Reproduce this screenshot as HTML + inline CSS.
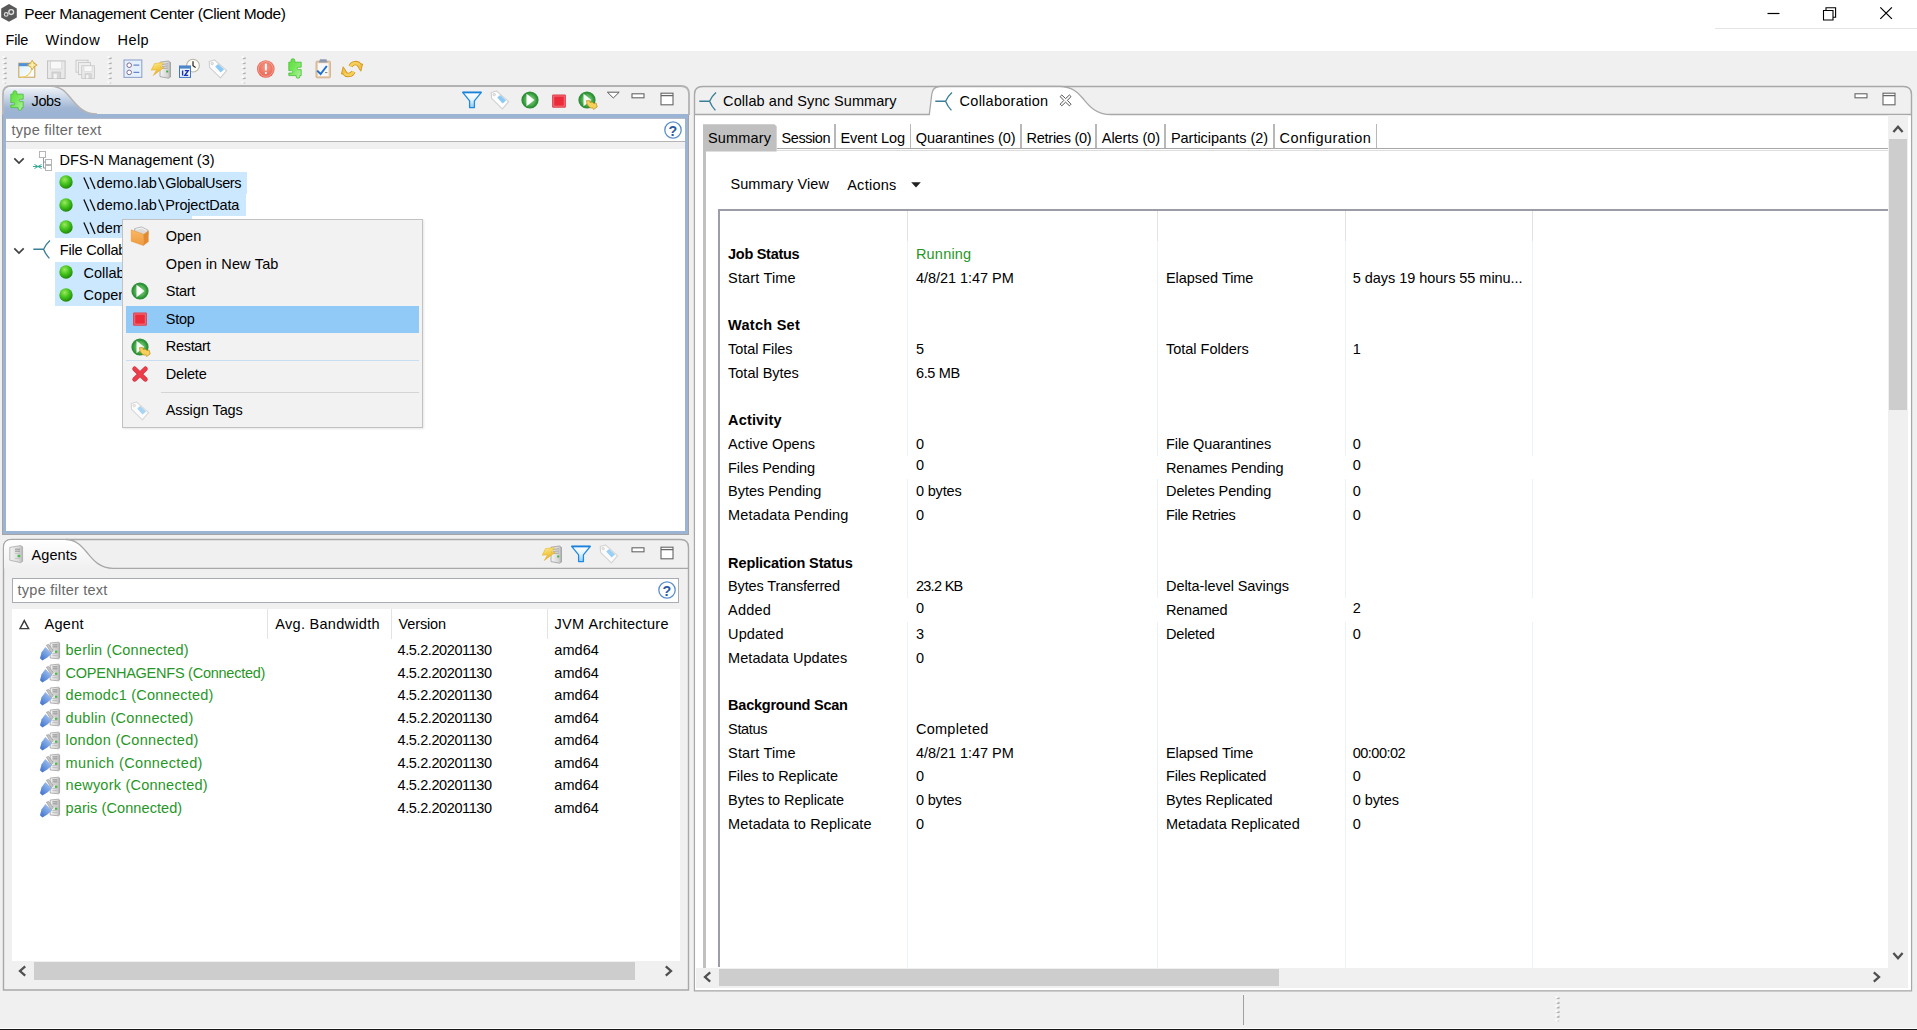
<!DOCTYPE html>
<html><head><meta charset="utf-8"><title>Peer Management Center (Client Mode)</title>
<style>
html,body{margin:0;padding:0;}
body{width:1917px;height:1030px;overflow:hidden;background:#f0f0f0;position:relative;font-family:"Liberation Sans",sans-serif;}
.t{position:absolute;white-space:nowrap;font-family:"Liberation Sans",sans-serif;}
.b{position:absolute;box-sizing:border-box;}
</style></head><body>
<div class="b" style="left:0px;top:0px;width:1917px;height:51px;background:#fff;"></div>
<div class="b" style="left:1715px;top:28px;width:202px;height:1px;background:#e5e5e5;"></div>
<svg class="b" style="left:0px;top:3px;" width="20" height="20" viewBox="0 0 20 20"><polygon points="9,1 16.8,5.4 16.8,14.4 9,18.8 1.2,14.4 1.2,5.4" fill="#595959"/><circle cx="6.2" cy="11.4" r="1.8" fill="none" stroke="#dcdcdc" stroke-width="1.2"/><circle cx="11.2" cy="9.1" r="2.4" fill="none" stroke="#e2e2e2" stroke-width="1.3"/></svg>
<div class="t" style="left:24.2px;top:6px;font-size:15.5px;line-height:15.5px;color:#000;letter-spacing:-0.397px;">Peer&nbsp;Management&nbsp;Center&nbsp;(Client&nbsp;Mode)</div>
<svg class="b" style="left:1760px;top:0px;" width="157" height="28" viewBox="0 0 157 28"><path d="M7.5 13.5h12" stroke="#000" stroke-width="1.2" fill="none"/><path d="M63.5 10.5h9.5v9.5h-9.5z M66 10.3v-2.6h9.6v9.6h-2.6" stroke="#000" stroke-width="1.1" fill="none"/><path d="M120.3 7.3l11.6 11.6M131.9 7.3l-11.6 11.6" stroke="#000" stroke-width="1.2" fill="none"/></svg>
<div class="t" style="left:5.6px;top:33px;font-size:14.5px;line-height:14.5px;color:#000;letter-spacing:-0.216px;">File</div>
<div class="t" style="left:45.6px;top:33px;font-size:14.5px;line-height:14.5px;color:#000;letter-spacing:0.488px;">Window</div>
<div class="t" style="left:117.6px;top:33px;font-size:14.5px;line-height:14.5px;color:#000;letter-spacing:0.419px;">Help</div>
<svg class="b" style="left:2.0999999999999996px;top:54.8px;" width="6" height="34.0" viewBox="0 0 6 34.0"><rect x="0.4" y="1.10" width="2" height="2" fill="#fbfbfb"/><path d="M1.6 4.10L4.4 1.90V4.10Z" fill="#ababab"/><rect x="1.8" y="3.10" width="2.6" height="1" fill="#b2b2b2"/><rect x="0.4" y="6.10" width="2" height="2" fill="#fbfbfb"/><path d="M1.6 9.10L4.4 6.90V9.10Z" fill="#ababab"/><rect x="1.8" y="8.10" width="2.6" height="1" fill="#b2b2b2"/><rect x="0.4" y="11.10" width="2" height="2" fill="#fbfbfb"/><path d="M1.6 14.10L4.4 11.90V14.10Z" fill="#ababab"/><rect x="1.8" y="13.10" width="2.6" height="1" fill="#b2b2b2"/><rect x="0.4" y="16.10" width="2" height="2" fill="#fbfbfb"/><path d="M1.6 19.10L4.4 16.90V19.10Z" fill="#ababab"/><rect x="1.8" y="18.10" width="2.6" height="1" fill="#b2b2b2"/><rect x="0.4" y="21.10" width="2" height="2" fill="#fbfbfb"/><path d="M1.6 24.10L4.4 21.90V24.10Z" fill="#ababab"/><rect x="1.8" y="23.10" width="2.6" height="1" fill="#b2b2b2"/><rect x="0.4" y="26.10" width="2" height="2" fill="#fbfbfb"/><rect x="2.6" y="27.50" width="1.6" height="1" fill="#c4c4c4"/></svg>
<svg class="b" style="left:107.2px;top:54.8px;" width="6" height="34.0" viewBox="0 0 6 34.0"><rect x="0.4" y="1.10" width="2" height="2" fill="#fbfbfb"/><path d="M1.6 4.10L4.4 1.90V4.10Z" fill="#ababab"/><rect x="1.8" y="3.10" width="2.6" height="1" fill="#b2b2b2"/><rect x="0.4" y="6.10" width="2" height="2" fill="#fbfbfb"/><path d="M1.6 9.10L4.4 6.90V9.10Z" fill="#ababab"/><rect x="1.8" y="8.10" width="2.6" height="1" fill="#b2b2b2"/><rect x="0.4" y="11.10" width="2" height="2" fill="#fbfbfb"/><path d="M1.6 14.10L4.4 11.90V14.10Z" fill="#ababab"/><rect x="1.8" y="13.10" width="2.6" height="1" fill="#b2b2b2"/><rect x="0.4" y="16.10" width="2" height="2" fill="#fbfbfb"/><path d="M1.6 19.10L4.4 16.90V19.10Z" fill="#ababab"/><rect x="1.8" y="18.10" width="2.6" height="1" fill="#b2b2b2"/><rect x="0.4" y="21.10" width="2" height="2" fill="#fbfbfb"/><path d="M1.6 24.10L4.4 21.90V24.10Z" fill="#ababab"/><rect x="1.8" y="23.10" width="2.6" height="1" fill="#b2b2b2"/><rect x="0.4" y="26.10" width="2" height="2" fill="#fbfbfb"/><rect x="2.6" y="27.50" width="1.6" height="1" fill="#c4c4c4"/></svg>
<svg class="b" style="left:241.1px;top:54.8px;" width="6" height="34.0" viewBox="0 0 6 34.0"><rect x="0.4" y="1.10" width="2" height="2" fill="#fbfbfb"/><path d="M1.6 4.10L4.4 1.90V4.10Z" fill="#ababab"/><rect x="1.8" y="3.10" width="2.6" height="1" fill="#b2b2b2"/><rect x="0.4" y="6.10" width="2" height="2" fill="#fbfbfb"/><path d="M1.6 9.10L4.4 6.90V9.10Z" fill="#ababab"/><rect x="1.8" y="8.10" width="2.6" height="1" fill="#b2b2b2"/><rect x="0.4" y="11.10" width="2" height="2" fill="#fbfbfb"/><path d="M1.6 14.10L4.4 11.90V14.10Z" fill="#ababab"/><rect x="1.8" y="13.10" width="2.6" height="1" fill="#b2b2b2"/><rect x="0.4" y="16.10" width="2" height="2" fill="#fbfbfb"/><path d="M1.6 19.10L4.4 16.90V19.10Z" fill="#ababab"/><rect x="1.8" y="18.10" width="2.6" height="1" fill="#b2b2b2"/><rect x="0.4" y="21.10" width="2" height="2" fill="#fbfbfb"/><path d="M1.6 24.10L4.4 21.90V24.10Z" fill="#ababab"/><rect x="1.8" y="23.10" width="2.6" height="1" fill="#b2b2b2"/><rect x="0.4" y="26.10" width="2" height="2" fill="#fbfbfb"/><rect x="2.6" y="27.50" width="1.6" height="1" fill="#c4c4c4"/></svg>
<div class="b" style="left:2.1px;top:114px;width:687.3px;height:421px;background:#a4a4a4;"></div>
<div class="b" style="left:3.1px;top:114px;width:685.3px;height:420.1px;background:#9cb4d3;"></div>
<div class="b" style="left:6px;top:119px;width:679.4px;height:412px;background:#fff;"></div>
<div class="b" style="left:6px;top:118.4px;width:679.4px;height:1px;background:#b4bccb;"></div>
<div class="b" style="left:6px;top:141px;width:679.4px;height:1px;background:#b4b4b4;"></div>
<div class="b" style="left:6px;top:142px;width:679.4px;height:6.5px;background:#f0f0f0;"></div>
<svg class="b" style="left:0px;top:82px;" width="700" height="36" viewBox="0 0 700 36"><defs><linearGradient id="gj" x1="0" y1="0" x2="0" y2="1"><stop offset="0" stop-color="#ffffff"/><stop offset="0.08" stop-color="#e9eef5"/><stop offset="0.45" stop-color="#c3d1e4"/><stop offset="0.78" stop-color="#9fb5d3"/><stop offset="1" stop-color="#9cb4d3"/></linearGradient></defs><path d="M3 33V12Q3 4 11 4H681Q689 4 689 12V33" fill="none" stroke="#b2b2b2" stroke-width="1.8"/><path d="M3.9 32.3V12.5Q3.9 4.9 11.5 4.9H51C61 4.9 66 11 71 17S83 32.3 97 32.3Z" fill="url(#gj)"/><path d="M51 4.2C61 4.2 66 10.5 71 16.5S83 32 97 32" fill="none" stroke="#b2b2b2" stroke-width="1.5"/></svg>
<div class="t" style="left:31.6px;top:94px;font-size:14.5px;line-height:14.5px;color:#000;letter-spacing:-0.407px;">Jobs</div>
<div class="t" style="left:11.6px;top:123px;font-size:14.5px;line-height:14.5px;color:#686868;letter-spacing:0.236px;">type&nbsp;filter&nbsp;text</div>
<div class="b" style="left:55px;top:172px;width:191.7px;height:22.19999999999999px;background:#cce8ff;"></div>
<div class="b" style="left:55px;top:194.2px;width:190.8px;height:22.100000000000023px;background:#cce8ff;"></div>
<div class="b" style="left:55px;top:216.3px;width:137.1px;height:22.099999999999994px;background:#cce8ff;"></div>
<div class="b" style="left:55px;top:261.8px;width:137.1px;height:22.19999999999999px;background:#cce8ff;"></div>
<div class="b" style="left:55px;top:284px;width:137.1px;height:22.399999999999977px;background:#cce8ff;"></div>
<svg class="b" style="left:13px;top:156.5px;" width="12" height="8" viewBox="0 0 12 8"><path d="M1.3 1.3L6 6L10.7 1.3" fill="none" stroke="#404040" stroke-width="1.7"/></svg>
<svg class="b" style="left:13px;top:246.5px;" width="12" height="8" viewBox="0 0 12 8"><path d="M1.3 1.3L6 6L10.7 1.3" fill="none" stroke="#404040" stroke-width="1.7"/></svg>
<svg class="b" style="left:56.900000000000006px;top:173.0px;" width="18" height="18" viewBox="0 0 18 18"><defs><radialGradient id="gb" cx="0.4" cy="0.32" r="0.7"><stop offset="0" stop-color="#9be860"/><stop offset="0.5" stop-color="#45c41c"/><stop offset="1" stop-color="#1d860b"/></radialGradient></defs><circle cx="9" cy="9" r="6.7" fill="url(#gb)"/></svg>
<svg class="b" style="left:56.900000000000006px;top:195.5px;" width="18" height="18" viewBox="0 0 18 18"><defs><radialGradient id="gb" cx="0.4" cy="0.32" r="0.7"><stop offset="0" stop-color="#9be860"/><stop offset="0.5" stop-color="#45c41c"/><stop offset="1" stop-color="#1d860b"/></radialGradient></defs><circle cx="9" cy="9" r="6.7" fill="url(#gb)"/></svg>
<svg class="b" style="left:56.900000000000006px;top:218.0px;" width="18" height="18" viewBox="0 0 18 18"><defs><radialGradient id="gb" cx="0.4" cy="0.32" r="0.7"><stop offset="0" stop-color="#9be860"/><stop offset="0.5" stop-color="#45c41c"/><stop offset="1" stop-color="#1d860b"/></radialGradient></defs><circle cx="9" cy="9" r="6.7" fill="url(#gb)"/></svg>
<svg class="b" style="left:56.900000000000006px;top:263.0px;" width="18" height="18" viewBox="0 0 18 18"><defs><radialGradient id="gb" cx="0.4" cy="0.32" r="0.7"><stop offset="0" stop-color="#9be860"/><stop offset="0.5" stop-color="#45c41c"/><stop offset="1" stop-color="#1d860b"/></radialGradient></defs><circle cx="9" cy="9" r="6.7" fill="url(#gb)"/></svg>
<svg class="b" style="left:56.900000000000006px;top:285.5px;" width="18" height="18" viewBox="0 0 18 18"><defs><radialGradient id="gb" cx="0.4" cy="0.32" r="0.7"><stop offset="0" stop-color="#9be860"/><stop offset="0.5" stop-color="#45c41c"/><stop offset="1" stop-color="#1d860b"/></radialGradient></defs><circle cx="9" cy="9" r="6.7" fill="url(#gb)"/></svg>
<svg class="b" style="left:32px;top:150px;" width="22" height="22" viewBox="0 0 22 22"><rect x="7.5" y="1.5" width="6" height="6" fill="#fff" stroke="#b5b5b5"/><rect x="13.5" y="9.5" width="6" height="5" fill="#fff" stroke="#b5b5b5"/><rect x="13.5" y="15.5" width="6" height="5" fill="#fff" stroke="#b5b5b5"/><path d="M11.5 8v10M11.5 12h2M11.5 18h2" stroke="#8a9ab0" fill="none"/><path d="M1 16.5h9M2.5 14.5l7 4M2.5 18.5l7-4" stroke="#3aa89a" stroke-width="1" fill="none"/></svg>
<svg class="b" style="left:33px;top:240.4px;" width="18" height="19" viewBox="0 0 18 19"><path d="M0.3 9.2H10.6M17 0.6Q12.6 4.6 10.6 9.2Q12.4 14 16.4 18.4" fill="none" stroke="#3a7f97" stroke-width="1.35"/></svg>
<div class="t" style="left:59.6px;top:153px;font-size:14.5px;line-height:14.5px;color:#000;letter-spacing:0.014px;">DFS-N&nbsp;Management&nbsp;(3)</div>
<svg class="b" style="left:83px;top:176.8px;" width="84" height="13" viewBox="0 0 84 13"><path d="M0.9 0.4L5.9 12" stroke="#111" stroke-width="1.35" fill="none"/><path d="M7.0 0.4L12.0 12" stroke="#111" stroke-width="1.35" fill="none"/><path d="M75.7 0.4L80.7 12" stroke="#111" stroke-width="1.35" fill="none"/></svg>
<div class="t" style="left:96.5px;top:176px;font-size:14.5px;line-height:14.5px;color:#000;letter-spacing:0.106px;">demo.lab</div>
<div class="t" style="left:165.2px;top:176px;font-size:14.5px;line-height:14.5px;color:#000;letter-spacing:-0.335px;">GlobalUsers</div>
<svg class="b" style="left:83px;top:198.8px;" width="84" height="13" viewBox="0 0 84 13"><path d="M0.9 0.4L5.9 12" stroke="#111" stroke-width="1.35" fill="none"/><path d="M7.0 0.4L12.0 12" stroke="#111" stroke-width="1.35" fill="none"/><path d="M75.7 0.4L80.7 12" stroke="#111" stroke-width="1.35" fill="none"/></svg>
<div class="t" style="left:96.5px;top:198px;font-size:14.5px;line-height:14.5px;color:#000;letter-spacing:0.106px;">demo.lab</div>
<div class="t" style="left:165.2px;top:198px;font-size:14.5px;line-height:14.5px;color:#000;letter-spacing:-0.151px;">ProjectData</div>
<svg class="b" style="left:83px;top:221.8px;" width="84" height="13" viewBox="0 0 84 13"><path d="M0.9 0.4L5.9 12" stroke="#111" stroke-width="1.35" fill="none"/><path d="M7.0 0.4L12.0 12" stroke="#111" stroke-width="1.35" fill="none"/><path d="M75.7 0.4L80.7 12" stroke="#111" stroke-width="1.35" fill="none"/></svg>
<div class="t" style="left:96.5px;top:221px;font-size:14.5px;line-height:14.5px;color:#000;letter-spacing:0.106px;">demo.lab</div>
<div class="t" style="left:165.2px;top:221px;font-size:14.5px;line-height:14.5px;color:#000;letter-spacing:0.151px;">Public</div>
<div class="t" style="left:59.8px;top:243px;font-size:14.5px;line-height:14.5px;color:#000;letter-spacing:-0.194px;">File&nbsp;Collaboration&nbsp;(2)</div>
<div class="t" style="left:83.6px;top:266px;font-size:14.5px;line-height:14.5px;color:#000;letter-spacing:-0.009px;">Collaboration</div>
<div class="t" style="left:83.6px;top:288px;font-size:14.5px;line-height:14.5px;color:#000;letter-spacing:0.021px;">Copenhagen</div>
<svg class="b" style="left:461.1px;top:90.2px;" width="22" height="20" viewBox="0 0 22 20"><defs><linearGradient id="gf" x1="0" y1="0" x2="0" y2="1"><stop offset="0" stop-color="#ffffff"/><stop offset="0.5" stop-color="#e4f3fd"/><stop offset="1" stop-color="#8fcbf5"/></linearGradient></defs><path d="M1.9 2.6H20.1L13.4 10.9V17.6H8.6V10.9Z" fill="url(#gf)" stroke="#1f8ae0" stroke-width="1.3" stroke-linejoin="round"/><path d="M1.4 2.3H20.6" stroke="#1b82da" stroke-width="1.7"/></svg>
<svg class="b" style="left:490.2px;top:89.8px;" width="20" height="20" viewBox="0 0 20 20"><g opacity="1.0"><path d="M1.2 2.6L6.4 0.9L18.6 11.6L12.4 18.9L1.6 8.4Z" fill="#fefefe" stroke="#cfcfcf" stroke-width="1.1" stroke-linejoin="round"/><path d="M7.2 7.6L10.2 4.9L16 10.4L12.6 13.6Z" fill="#8ccaf6"/><circle cx="4.2" cy="4.6" r="1.25" fill="#ececec" stroke="#c4c4c4" stroke-width="0.7"/></g></svg>
<svg class="b" style="left:519.5px;top:90.2px;" width="20" height="20" viewBox="0 0 20 20"><defs><radialGradient id="gp" cx="0.5" cy="0.5" r="0.5"><stop offset="0" stop-color="#8fd486"/><stop offset="0.55" stop-color="#55b257"/><stop offset="0.82" stop-color="#2f9438"/><stop offset="1" stop-color="#2b8a33"/></radialGradient><linearGradient id="gpt" x1="0" y1="0" x2="1" y2="0"><stop offset="0" stop-color="#ffffff"/><stop offset="0.55" stop-color="#ffffff"/><stop offset="1" stop-color="#d4efd0"/></linearGradient></defs><circle cx="10" cy="10" r="8.6" fill="url(#gp)"/><path d="M6.5 3.7L14.6 10L6.5 16.3Z" fill="url(#gpt)"/></svg>
<svg class="b" style="left:549.9px;top:91.9px;" width="18" height="18" viewBox="0 0 18 18"><rect x="2.1" y="2.4" width="13.8" height="13.4" rx="1.2" fill="#e23e4b"/><rect x="3.3" y="3.6" width="11.4" height="11" fill="#f07680"/><rect x="4.2" y="4.5" width="9.6" height="9.2" fill="#ec2b3a"/></svg>
<svg class="b" style="left:576.6px;top:90.2px;" width="24" height="24" viewBox="0 0 24 24"><circle cx="10" cy="10" r="8.6" fill="url(#gp)"/><path d="M6.5 3.7L14.6 10L6.5 16.3Z" fill="url(#gpt)" opacity="0.92"/><g transform="translate(1.6,1.8) scale(0.86)"><path d="M9.2 10.2L13.2 10.4L13.6 12.4C15.4 11.8 17 12.4 17.8 13.6L20.4 13.2L21.6 17.6L17.4 20.6L16.6 18.6C14.6 19.4 12.4 18.4 11.4 16.6C10.6 15.8 10 15 9.8 14.2Z" fill="#f6d05c" stroke="#bf8a16" stroke-width="0.8" stroke-linejoin="round"/></g></svg>
<svg class="b" style="left:606px;top:90px;" width="15" height="10" viewBox="0 0 15 10"><path d="M1.4 2.2H13.2L7.3 8Z" fill="#fff" stroke="#5a5a5a" stroke-width="1"/></svg>
<svg class="b" style="left:631px;top:92.7px;" width="14" height="6" viewBox="0 0 14 6"><rect x="1" y="0.8" width="12" height="4" fill="#fff" stroke="#666" stroke-width="1.1"/></svg>
<svg class="b" style="left:659.7px;top:92.2px;" width="14" height="14" viewBox="0 0 14 14"><rect x="1" y="1.2" width="12" height="11.6" fill="#fff" stroke="#666" stroke-width="1.1"/><path d="M1 3.6H13" stroke="#666" stroke-width="1.3"/></svg>
<svg class="b" style="left:663px;top:120.30000000000001px;" width="20" height="20" viewBox="0 0 20 20"><circle cx="10" cy="10" r="8.2" fill="#fdfeff" stroke="#5d8fc8" stroke-width="1.3"/></svg>
<div class="t" style="left:668.5px;top:124px;font-size:14.2px;line-height:14.2px;font-weight:bold;color:#2a5aa2;">?</div>
<div class="b" style="left:122px;top:219px;width:301px;height:209px;background:#f2f2f2;border:1px solid #c2c2c2;box-shadow:0.5px 1px 2px rgba(0,0,0,0.10);"></div>
<div class="b" style="left:126px;top:305.6px;width:292.8px;height:27.2px;background:#91c9f7;"></div>
<div class="b" style="left:126px;top:359.6px;width:292.8px;height:1px;background:#c9ddf0;"></div>
<div class="b" style="left:160.7px;top:392px;width:258.1px;height:1px;background:#d4d4d4;"></div>
<div class="t" style="left:165.8px;top:229px;font-size:14.5px;line-height:14.5px;color:#000;letter-spacing:-0.018px;">Open</div>
<div class="t" style="left:165.8px;top:257px;font-size:14.5px;line-height:14.5px;color:#000;letter-spacing:0.095px;">Open&nbsp;in&nbsp;New&nbsp;Tab</div>
<div class="t" style="left:165.8px;top:284px;font-size:14.5px;line-height:14.5px;color:#000;letter-spacing:-0.284px;">Start</div>
<div class="t" style="left:165.8px;top:312px;font-size:14.5px;line-height:14.5px;color:#000;letter-spacing:-0.257px;">Stop</div>
<div class="t" style="left:165.8px;top:339px;font-size:14.5px;line-height:14.5px;color:#000;letter-spacing:-0.319px;">Restart</div>
<div class="t" style="left:165.8px;top:367px;font-size:14.5px;line-height:14.5px;color:#000;letter-spacing:-0.186px;">Delete</div>
<div class="t" style="left:165.8px;top:403px;font-size:14.5px;line-height:14.5px;color:#000;letter-spacing:-0.120px;">Assign&nbsp;Tags</div>
<svg class="b" style="left:129.8px;top:225.5px;" width="20" height="20" viewBox="0 0 20 20"><defs><linearGradient id="gfo" x1="0" y1="0" x2="0" y2="1"><stop offset="0" stop-color="#f9b865"/><stop offset="1" stop-color="#f09a3c"/></linearGradient></defs><path d="M4.6 2.6L11.4 0.9L17.9 4V9H4.6Z" fill="#dcdcdc" stroke="#a9a9a9" stroke-width="0.7"/><path d="M6 3.4L11.6 2.2L16.6 4.6" fill="none" stroke="#f6f6f6" stroke-width="0.9"/><path d="M1.2 3.8L13.6 8.2V19.6L1.2 15.2Z" fill="url(#gfo)" stroke="#e08f34" stroke-width="0.5"/><path d="M13.6 8.2L18.6 4.4V15.8L13.6 19.6Z" fill="#e48b32"/></svg>
<svg class="b" style="left:129.6px;top:281.4px;" width="20" height="20" viewBox="0 0 20 20"><defs><radialGradient id="gp" cx="0.5" cy="0.5" r="0.5"><stop offset="0" stop-color="#8fd486"/><stop offset="0.55" stop-color="#55b257"/><stop offset="0.82" stop-color="#2f9438"/><stop offset="1" stop-color="#2b8a33"/></radialGradient><linearGradient id="gpt" x1="0" y1="0" x2="1" y2="0"><stop offset="0" stop-color="#ffffff"/><stop offset="0.55" stop-color="#ffffff"/><stop offset="1" stop-color="#d4efd0"/></linearGradient></defs><circle cx="10" cy="10" r="8.6" fill="url(#gp)"/><path d="M6.5 3.7L14.6 10L6.5 16.3Z" fill="url(#gpt)"/></svg>
<svg class="b" style="left:130.8px;top:310.2px;" width="18" height="18" viewBox="0 0 18 18"><rect x="2.1" y="2.4" width="13.8" height="13.4" rx="1.2" fill="#e23e4b"/><rect x="3.3" y="3.6" width="11.4" height="11" fill="#f07680"/><rect x="4.2" y="4.5" width="9.6" height="9.2" fill="#ec2b3a"/></svg>
<svg class="b" style="left:129.6px;top:336.5px;" width="24" height="24" viewBox="0 0 24 24"><circle cx="10" cy="10" r="8.6" fill="url(#gp)"/><path d="M6.5 3.7L14.6 10L6.5 16.3Z" fill="url(#gpt)" opacity="0.92"/><g transform="translate(1.6,1.8) scale(0.86)"><path d="M9.2 10.2L13.2 10.4L13.6 12.4C15.4 11.8 17 12.4 17.8 13.6L20.4 13.2L21.6 17.6L17.4 20.6L16.6 18.6C14.6 19.4 12.4 18.4 11.4 16.6C10.6 15.8 10 15 9.8 14.2Z" fill="#f6d05c" stroke="#bf8a16" stroke-width="0.8" stroke-linejoin="round"/></g></svg>
<svg class="b" style="left:130.8px;top:365px;" width="18" height="18" viewBox="0 0 18 18"><path d="M3.6 3.8L14.4 14.4M14.4 3.8L3.6 14.4" stroke="#d42a37" stroke-width="4.6" stroke-linecap="round" fill="none"/><path d="M3.6 3.8L14.4 14.4M14.4 3.8L3.6 14.4" stroke="#ea3f4b" stroke-width="3.4" stroke-linecap="round" fill="none"/></svg>
<svg class="b" style="left:129.8px;top:400.5px;" width="20" height="20" viewBox="0 0 20 20"><g opacity="0.75"><path d="M1.2 2.6L6.4 0.9L18.6 11.6L12.4 18.9L1.6 8.4Z" fill="#fefefe" stroke="#cfcfcf" stroke-width="1.1" stroke-linejoin="round"/><path d="M7.2 7.6L10.2 4.9L16 10.4L12.6 13.6Z" fill="#8ccaf6"/><circle cx="4.2" cy="4.6" r="1.25" fill="#ececec" stroke="#c4c4c4" stroke-width="0.7"/></g></svg>
<svg class="b" style="left:0px;top:536px;" width="700" height="458" viewBox="0 0 700 458"><defs><linearGradient id="ga" x1="0" y1="0" x2="0" y2="1"><stop offset="0" stop-color="#ffffff"/><stop offset="1" stop-color="#f0f0f0"/></linearGradient></defs><path d="M3.5 454V11.5Q3.5 3.5 11.5 3.5H680.5Q688.5 3.5 688.5 11.5V454Z" fill="#f0f0f0" stroke="#a8a8a8" stroke-width="1.4"/><path d="M4 32.4V11.5Q4 4 11.5 4H66C76 4 82 11 87 17S99 32.4 113 32.4Z" fill="url(#ga)"/><path d="M66 3.5C76 3.5 82 10.5 87 16.5S99 32.4 113 32.4H688" fill="none" stroke="#a8a8a8" stroke-width="1.3"/></svg>
<svg class="b" style="left:9.2px;top:544.8px;" width="15" height="19" viewBox="0 0 15 19"><defs><linearGradient id="gsv2" x1="0" y1="0" x2="1" y2="0"><stop offset="0" stop-color="#f2f2f2"/><stop offset="0.7" stop-color="#dadada"/><stop offset="1" stop-color="#b4b4b4"/></linearGradient></defs><path d="M0.8 2.4L11.6 0.6L13.6 1.8V16.4L11.6 17.6L0.8 15.2Z" fill="url(#gsv2)" stroke="#a8a8a8" stroke-width="0.8"/><path d="M6 4.2h5M6 6.2h5" stroke="#8a8a8a" stroke-width="0.9"/><path d="M6 8.4h5M6 13.4h5" stroke="#bdbdbd" stroke-width="0.8"/><rect x="8.6" y="9.8" width="2.6" height="2.4" fill="#45b84a"/></svg>
<div class="t" style="left:31.6px;top:548px;font-size:14.5px;line-height:14.5px;color:#000;letter-spacing:0.059px;">Agents</div>
<div class="b" style="left:12px;top:578.4px;width:667px;height:24.4px;background:#fff;border:1px solid #a9adb3;"></div>
<div class="t" style="left:17.6px;top:583px;font-size:14.5px;line-height:14.5px;color:#686868;letter-spacing:0.236px;">type&nbsp;filter&nbsp;text</div>
<svg class="b" style="left:657px;top:580.2px;" width="20" height="20" viewBox="0 0 20 20"><circle cx="10" cy="10" r="8.2" fill="#fdfeff" stroke="#5d8fc8" stroke-width="1.3"/></svg>
<div class="t" style="left:662.5px;top:584px;font-size:14.2px;line-height:14.2px;font-weight:bold;color:#2a5aa2;">?</div>
<div class="b" style="left:12px;top:609px;width:667.5px;height:352px;background:#fff;"></div>
<div class="b" style="left:267px;top:609px;width:1px;height:30px;background:#e3e3e3;"></div>
<div class="b" style="left:391px;top:609px;width:1px;height:30px;background:#e3e3e3;"></div>
<div class="b" style="left:547.4px;top:609px;width:1px;height:30px;background:#e3e3e3;"></div>
<svg class="b" style="left:18px;top:619px;" width="13" height="11" viewBox="0 0 13 11"><path d="M2 9.6L6.3 1.6L10.6 9.6Z" fill="none" stroke="#3c3c3c" stroke-width="1.4"/></svg>
<div class="t" style="left:44.6px;top:617px;font-size:14.5px;line-height:14.5px;color:#000;letter-spacing:0.261px;">Agent</div>
<div class="t" style="left:275.3px;top:617px;font-size:14.5px;line-height:14.5px;color:#000;letter-spacing:0.293px;">Avg.&nbsp;Bandwidth</div>
<div class="t" style="left:398.6px;top:617px;font-size:14.5px;line-height:14.5px;color:#000;letter-spacing:-0.152px;">Version</div>
<div class="t" style="left:554.6px;top:617px;font-size:14.5px;line-height:14.5px;color:#000;letter-spacing:0.231px;">JVM&nbsp;Architecture</div>
<svg class="b" style="left:38.5px;top:640.5px;" width="22" height="21" viewBox="0 0 22 21"><defs><linearGradient id="gsv" x1="0" y1="0" x2="1" y2="0"><stop offset="0" stop-color="#f4f4f4"/><stop offset="0.75" stop-color="#d4d4d4"/><stop offset="1" stop-color="#a8a8a8"/></linearGradient><linearGradient id="gpl" x1="0.9" y1="0" x2="0.1" y2="1"><stop offset="0" stop-color="#b4cdf0"/><stop offset="0.55" stop-color="#6f9be0"/><stop offset="1" stop-color="#3f6fc8"/></linearGradient></defs><path d="M11.2 2L19.6 1.2L20.6 2V17L19.6 17.8L11.2 17Z" fill="url(#gsv)" stroke="#a2a2a2" stroke-width="0.8"/><path d="M13.4 3.9H18.4M13.4 5.9H18.4" stroke="#7d7d7d" stroke-width="0.9"/><path d="M13.4 8H18.4M13.4 12.6H18.4M13.4 14.6H18.4" stroke="#b5b5b5" stroke-width="0.8"/><rect x="16" y="9.6" width="2.4" height="2.2" fill="#46b84a"/><path d="M7.4 4.2L9.6 3.4L14.2 9.4L12.2 11.8Z" fill="#c4c4c4" stroke="#8e8e8e" stroke-width="0.6"/><path d="M1 17.2L2.6 11.2L6.4 6L13 12.4L8.4 16.6L3.4 19.6Z" fill="url(#gpl)"/></svg>
<div class="t" style="left:65.6px;top:643px;font-size:14.5px;line-height:14.5px;color:#279627;letter-spacing:0.217px;">berlin&nbsp;(Connected)</div>
<div class="t" style="left:397.6px;top:643px;font-size:14.5px;line-height:14.5px;color:#000;letter-spacing:-0.408px;">4.5.2.20201130</div>
<div class="t" style="left:554.3px;top:643px;font-size:14.5px;line-height:14.5px;color:#000;letter-spacing:0.053px;">amd64</div>
<svg class="b" style="left:38.5px;top:663.0px;" width="22" height="21" viewBox="0 0 22 21"><defs><linearGradient id="gsv" x1="0" y1="0" x2="1" y2="0"><stop offset="0" stop-color="#f4f4f4"/><stop offset="0.75" stop-color="#d4d4d4"/><stop offset="1" stop-color="#a8a8a8"/></linearGradient><linearGradient id="gpl" x1="0.9" y1="0" x2="0.1" y2="1"><stop offset="0" stop-color="#b4cdf0"/><stop offset="0.55" stop-color="#6f9be0"/><stop offset="1" stop-color="#3f6fc8"/></linearGradient></defs><path d="M11.2 2L19.6 1.2L20.6 2V17L19.6 17.8L11.2 17Z" fill="url(#gsv)" stroke="#a2a2a2" stroke-width="0.8"/><path d="M13.4 3.9H18.4M13.4 5.9H18.4" stroke="#7d7d7d" stroke-width="0.9"/><path d="M13.4 8H18.4M13.4 12.6H18.4M13.4 14.6H18.4" stroke="#b5b5b5" stroke-width="0.8"/><rect x="16" y="9.6" width="2.4" height="2.2" fill="#46b84a"/><path d="M7.4 4.2L9.6 3.4L14.2 9.4L12.2 11.8Z" fill="#c4c4c4" stroke="#8e8e8e" stroke-width="0.6"/><path d="M1 17.2L2.6 11.2L6.4 6L13 12.4L8.4 16.6L3.4 19.6Z" fill="url(#gpl)"/></svg>
<div class="t" style="left:65.6px;top:666px;font-size:14.5px;line-height:14.5px;color:#279627;letter-spacing:-0.245px;">COPENHAGENFS&nbsp;(Connected)</div>
<div class="t" style="left:397.6px;top:666px;font-size:14.5px;line-height:14.5px;color:#000;letter-spacing:-0.408px;">4.5.2.20201130</div>
<div class="t" style="left:554.3px;top:666px;font-size:14.5px;line-height:14.5px;color:#000;letter-spacing:0.053px;">amd64</div>
<svg class="b" style="left:38.5px;top:685.5px;" width="22" height="21" viewBox="0 0 22 21"><defs><linearGradient id="gsv" x1="0" y1="0" x2="1" y2="0"><stop offset="0" stop-color="#f4f4f4"/><stop offset="0.75" stop-color="#d4d4d4"/><stop offset="1" stop-color="#a8a8a8"/></linearGradient><linearGradient id="gpl" x1="0.9" y1="0" x2="0.1" y2="1"><stop offset="0" stop-color="#b4cdf0"/><stop offset="0.55" stop-color="#6f9be0"/><stop offset="1" stop-color="#3f6fc8"/></linearGradient></defs><path d="M11.2 2L19.6 1.2L20.6 2V17L19.6 17.8L11.2 17Z" fill="url(#gsv)" stroke="#a2a2a2" stroke-width="0.8"/><path d="M13.4 3.9H18.4M13.4 5.9H18.4" stroke="#7d7d7d" stroke-width="0.9"/><path d="M13.4 8H18.4M13.4 12.6H18.4M13.4 14.6H18.4" stroke="#b5b5b5" stroke-width="0.8"/><rect x="16" y="9.6" width="2.4" height="2.2" fill="#46b84a"/><path d="M7.4 4.2L9.6 3.4L14.2 9.4L12.2 11.8Z" fill="#c4c4c4" stroke="#8e8e8e" stroke-width="0.6"/><path d="M1 17.2L2.6 11.2L6.4 6L13 12.4L8.4 16.6L3.4 19.6Z" fill="url(#gpl)"/></svg>
<div class="t" style="left:65.6px;top:688px;font-size:14.5px;line-height:14.5px;color:#279627;letter-spacing:0.243px;">demodc1&nbsp;(Connected)</div>
<div class="t" style="left:397.6px;top:688px;font-size:14.5px;line-height:14.5px;color:#000;letter-spacing:-0.408px;">4.5.2.20201130</div>
<div class="t" style="left:554.3px;top:688px;font-size:14.5px;line-height:14.5px;color:#000;letter-spacing:0.053px;">amd64</div>
<svg class="b" style="left:38.5px;top:708.0px;" width="22" height="21" viewBox="0 0 22 21"><defs><linearGradient id="gsv" x1="0" y1="0" x2="1" y2="0"><stop offset="0" stop-color="#f4f4f4"/><stop offset="0.75" stop-color="#d4d4d4"/><stop offset="1" stop-color="#a8a8a8"/></linearGradient><linearGradient id="gpl" x1="0.9" y1="0" x2="0.1" y2="1"><stop offset="0" stop-color="#b4cdf0"/><stop offset="0.55" stop-color="#6f9be0"/><stop offset="1" stop-color="#3f6fc8"/></linearGradient></defs><path d="M11.2 2L19.6 1.2L20.6 2V17L19.6 17.8L11.2 17Z" fill="url(#gsv)" stroke="#a2a2a2" stroke-width="0.8"/><path d="M13.4 3.9H18.4M13.4 5.9H18.4" stroke="#7d7d7d" stroke-width="0.9"/><path d="M13.4 8H18.4M13.4 12.6H18.4M13.4 14.6H18.4" stroke="#b5b5b5" stroke-width="0.8"/><rect x="16" y="9.6" width="2.4" height="2.2" fill="#46b84a"/><path d="M7.4 4.2L9.6 3.4L14.2 9.4L12.2 11.8Z" fill="#c4c4c4" stroke="#8e8e8e" stroke-width="0.6"/><path d="M1 17.2L2.6 11.2L6.4 6L13 12.4L8.4 16.6L3.4 19.6Z" fill="url(#gpl)"/></svg>
<div class="t" style="left:65.6px;top:711px;font-size:14.5px;line-height:14.5px;color:#279627;letter-spacing:0.304px;">dublin&nbsp;(Connected)</div>
<div class="t" style="left:397.6px;top:711px;font-size:14.5px;line-height:14.5px;color:#000;letter-spacing:-0.408px;">4.5.2.20201130</div>
<div class="t" style="left:554.3px;top:711px;font-size:14.5px;line-height:14.5px;color:#000;letter-spacing:0.053px;">amd64</div>
<svg class="b" style="left:38.5px;top:730.5px;" width="22" height="21" viewBox="0 0 22 21"><defs><linearGradient id="gsv" x1="0" y1="0" x2="1" y2="0"><stop offset="0" stop-color="#f4f4f4"/><stop offset="0.75" stop-color="#d4d4d4"/><stop offset="1" stop-color="#a8a8a8"/></linearGradient><linearGradient id="gpl" x1="0.9" y1="0" x2="0.1" y2="1"><stop offset="0" stop-color="#b4cdf0"/><stop offset="0.55" stop-color="#6f9be0"/><stop offset="1" stop-color="#3f6fc8"/></linearGradient></defs><path d="M11.2 2L19.6 1.2L20.6 2V17L19.6 17.8L11.2 17Z" fill="url(#gsv)" stroke="#a2a2a2" stroke-width="0.8"/><path d="M13.4 3.9H18.4M13.4 5.9H18.4" stroke="#7d7d7d" stroke-width="0.9"/><path d="M13.4 8H18.4M13.4 12.6H18.4M13.4 14.6H18.4" stroke="#b5b5b5" stroke-width="0.8"/><rect x="16" y="9.6" width="2.4" height="2.2" fill="#46b84a"/><path d="M7.4 4.2L9.6 3.4L14.2 9.4L12.2 11.8Z" fill="#c4c4c4" stroke="#8e8e8e" stroke-width="0.6"/><path d="M1 17.2L2.6 11.2L6.4 6L13 12.4L8.4 16.6L3.4 19.6Z" fill="url(#gpl)"/></svg>
<div class="t" style="left:65.6px;top:733px;font-size:14.5px;line-height:14.5px;color:#279627;letter-spacing:0.318px;">london&nbsp;(Connected)</div>
<div class="t" style="left:397.6px;top:733px;font-size:14.5px;line-height:14.5px;color:#000;letter-spacing:-0.408px;">4.5.2.20201130</div>
<div class="t" style="left:554.3px;top:733px;font-size:14.5px;line-height:14.5px;color:#000;letter-spacing:0.053px;">amd64</div>
<svg class="b" style="left:38.5px;top:753.0px;" width="22" height="21" viewBox="0 0 22 21"><defs><linearGradient id="gsv" x1="0" y1="0" x2="1" y2="0"><stop offset="0" stop-color="#f4f4f4"/><stop offset="0.75" stop-color="#d4d4d4"/><stop offset="1" stop-color="#a8a8a8"/></linearGradient><linearGradient id="gpl" x1="0.9" y1="0" x2="0.1" y2="1"><stop offset="0" stop-color="#b4cdf0"/><stop offset="0.55" stop-color="#6f9be0"/><stop offset="1" stop-color="#3f6fc8"/></linearGradient></defs><path d="M11.2 2L19.6 1.2L20.6 2V17L19.6 17.8L11.2 17Z" fill="url(#gsv)" stroke="#a2a2a2" stroke-width="0.8"/><path d="M13.4 3.9H18.4M13.4 5.9H18.4" stroke="#7d7d7d" stroke-width="0.9"/><path d="M13.4 8H18.4M13.4 12.6H18.4M13.4 14.6H18.4" stroke="#b5b5b5" stroke-width="0.8"/><rect x="16" y="9.6" width="2.4" height="2.2" fill="#46b84a"/><path d="M7.4 4.2L9.6 3.4L14.2 9.4L12.2 11.8Z" fill="#c4c4c4" stroke="#8e8e8e" stroke-width="0.6"/><path d="M1 17.2L2.6 11.2L6.4 6L13 12.4L8.4 16.6L3.4 19.6Z" fill="url(#gpl)"/></svg>
<div class="t" style="left:65.6px;top:756px;font-size:14.5px;line-height:14.5px;color:#279627;letter-spacing:0.368px;">munich&nbsp;(Connected)</div>
<div class="t" style="left:397.6px;top:756px;font-size:14.5px;line-height:14.5px;color:#000;letter-spacing:-0.408px;">4.5.2.20201130</div>
<div class="t" style="left:554.3px;top:756px;font-size:14.5px;line-height:14.5px;color:#000;letter-spacing:0.053px;">amd64</div>
<svg class="b" style="left:38.5px;top:775.5px;" width="22" height="21" viewBox="0 0 22 21"><defs><linearGradient id="gsv" x1="0" y1="0" x2="1" y2="0"><stop offset="0" stop-color="#f4f4f4"/><stop offset="0.75" stop-color="#d4d4d4"/><stop offset="1" stop-color="#a8a8a8"/></linearGradient><linearGradient id="gpl" x1="0.9" y1="0" x2="0.1" y2="1"><stop offset="0" stop-color="#b4cdf0"/><stop offset="0.55" stop-color="#6f9be0"/><stop offset="1" stop-color="#3f6fc8"/></linearGradient></defs><path d="M11.2 2L19.6 1.2L20.6 2V17L19.6 17.8L11.2 17Z" fill="url(#gsv)" stroke="#a2a2a2" stroke-width="0.8"/><path d="M13.4 3.9H18.4M13.4 5.9H18.4" stroke="#7d7d7d" stroke-width="0.9"/><path d="M13.4 8H18.4M13.4 12.6H18.4M13.4 14.6H18.4" stroke="#b5b5b5" stroke-width="0.8"/><rect x="16" y="9.6" width="2.4" height="2.2" fill="#46b84a"/><path d="M7.4 4.2L9.6 3.4L14.2 9.4L12.2 11.8Z" fill="#c4c4c4" stroke="#8e8e8e" stroke-width="0.6"/><path d="M1 17.2L2.6 11.2L6.4 6L13 12.4L8.4 16.6L3.4 19.6Z" fill="url(#gpl)"/></svg>
<div class="t" style="left:65.6px;top:778px;font-size:14.5px;line-height:14.5px;color:#279627;letter-spacing:0.231px;">newyork&nbsp;(Connected)</div>
<div class="t" style="left:397.6px;top:778px;font-size:14.5px;line-height:14.5px;color:#000;letter-spacing:-0.408px;">4.5.2.20201130</div>
<div class="t" style="left:554.3px;top:778px;font-size:14.5px;line-height:14.5px;color:#000;letter-spacing:0.053px;">amd64</div>
<svg class="b" style="left:38.5px;top:798.0px;" width="22" height="21" viewBox="0 0 22 21"><defs><linearGradient id="gsv" x1="0" y1="0" x2="1" y2="0"><stop offset="0" stop-color="#f4f4f4"/><stop offset="0.75" stop-color="#d4d4d4"/><stop offset="1" stop-color="#a8a8a8"/></linearGradient><linearGradient id="gpl" x1="0.9" y1="0" x2="0.1" y2="1"><stop offset="0" stop-color="#b4cdf0"/><stop offset="0.55" stop-color="#6f9be0"/><stop offset="1" stop-color="#3f6fc8"/></linearGradient></defs><path d="M11.2 2L19.6 1.2L20.6 2V17L19.6 17.8L11.2 17Z" fill="url(#gsv)" stroke="#a2a2a2" stroke-width="0.8"/><path d="M13.4 3.9H18.4M13.4 5.9H18.4" stroke="#7d7d7d" stroke-width="0.9"/><path d="M13.4 8H18.4M13.4 12.6H18.4M13.4 14.6H18.4" stroke="#b5b5b5" stroke-width="0.8"/><rect x="16" y="9.6" width="2.4" height="2.2" fill="#46b84a"/><path d="M7.4 4.2L9.6 3.4L14.2 9.4L12.2 11.8Z" fill="#c4c4c4" stroke="#8e8e8e" stroke-width="0.6"/><path d="M1 17.2L2.6 11.2L6.4 6L13 12.4L8.4 16.6L3.4 19.6Z" fill="url(#gpl)"/></svg>
<div class="t" style="left:65.6px;top:801px;font-size:14.5px;line-height:14.5px;color:#279627;letter-spacing:0.085px;">paris&nbsp;(Connected)</div>
<div class="t" style="left:397.6px;top:801px;font-size:14.5px;line-height:14.5px;color:#000;letter-spacing:-0.408px;">4.5.2.20201130</div>
<div class="t" style="left:554.3px;top:801px;font-size:14.5px;line-height:14.5px;color:#000;letter-spacing:0.053px;">amd64</div>
<div class="b" style="left:33.6px;top:961.6px;width:601.8px;height:18.4px;background:#cdcdcd;"></div>
<svg class="b" style="left:17px;top:964px;" width="10" height="14" viewBox="0 0 10 14"><path d="M8.2 2.4L3 7L8.2 11.6" fill="none" stroke="#4f4f4f" stroke-width="2.3"/></svg>
<svg class="b" style="left:664px;top:964px;" width="10" height="14" viewBox="0 0 10 14"><path d="M1.8 2.4L7 7L1.8 11.6" fill="none" stroke="#4f4f4f" stroke-width="2.3"/></svg>
<svg class="b" style="left:541px;top:544.6px;" width="22" height="20" viewBox="0 0 22 20"><defs><linearGradient id="gbolt" x1="0" y1="0" x2="0.3" y2="1"><stop offset="0" stop-color="#faea96"/><stop offset="0.5" stop-color="#f3cf4e"/><stop offset="1" stop-color="#e6ac24"/></linearGradient></defs><path d="M10 2.2L18.5 1L20.5 2.4V17L18.5 18.2L10 16.6Z" fill="url(#gsv)" stroke="#9c9c9c" stroke-width="0.8"/><path d="M12 4.4l6-0.6M12 6.4l6-0.4M12 8.4l6-0.2" stroke="#9a9a9a" stroke-width="0.8"/><rect x="16.2" y="10.5" width="2" height="2" fill="#3cb043"/><path d="M4.5 3.5L13.5 2.6L10.6 7.4L14.4 7.2L3.2 15.6L6.6 9.8L1.2 10.2Z" fill="url(#gbolt)" stroke="#e3ad22" stroke-width="0.5"/></svg>
<svg class="b" style="left:569.6px;top:543.8px;" width="22" height="20" viewBox="0 0 22 20"><defs><linearGradient id="gf" x1="0" y1="0" x2="0" y2="1"><stop offset="0" stop-color="#ffffff"/><stop offset="0.5" stop-color="#e4f3fd"/><stop offset="1" stop-color="#8fcbf5"/></linearGradient></defs><path d="M1.9 2.6H20.1L13.4 10.9V17.6H8.6V10.9Z" fill="url(#gf)" stroke="#1f8ae0" stroke-width="1.3" stroke-linejoin="round"/><path d="M1.4 2.3H20.6" stroke="#1b82da" stroke-width="1.7"/></svg>
<svg class="b" style="left:599px;top:543.8px;" width="20" height="20" viewBox="0 0 20 20"><g opacity="0.85"><path d="M1.2 2.6L6.4 0.9L18.6 11.6L12.4 18.9L1.6 8.4Z" fill="#fefefe" stroke="#cfcfcf" stroke-width="1.1" stroke-linejoin="round"/><path d="M7.2 7.6L10.2 4.9L16 10.4L12.6 13.6Z" fill="#8ccaf6"/><circle cx="4.2" cy="4.6" r="1.25" fill="#ececec" stroke="#c4c4c4" stroke-width="0.7"/></g></svg>
<svg class="b" style="left:631px;top:546.6px;" width="14" height="6" viewBox="0 0 14 6"><rect x="1" y="0.8" width="12" height="4" fill="#fff" stroke="#666" stroke-width="1.1"/></svg>
<svg class="b" style="left:660px;top:545.8px;" width="14" height="14" viewBox="0 0 14 14"><rect x="1" y="1.2" width="12" height="11.6" fill="#fff" stroke="#666" stroke-width="1.1"/><path d="M1 3.6H13" stroke="#666" stroke-width="1.3"/></svg>
<svg class="b" style="left:690px;top:82px;" width="1227" height="912" viewBox="0 0 1227 912"><path d="M4.5 908.8V12.5Q4.5 4.5 12.5 4.5H1213.5Q1221.5 4.5 1221.5 12.5V908.8Z" fill="#f0f0f0" stroke="#a8a8a8" stroke-width="1.4"/><rect x="5.1" y="33" width="1215.8" height="875.2" fill="#fff"/><path d="M239 33.2L241.5 12Q242.5 5 250 5H370C382 5 388 11 393 17S405 33.2 421 33.2Z" fill="#fff"/><path d="M5 32.5H239.3L241.8 12Q242.8 4.5 250 4.5H370C382 4.5 388 10.5 393 16.5S405 32.5 421 32.5H1221" fill="none" stroke="#a8a8a8" stroke-width="1.3"/></svg>
<svg class="b" style="left:698.5px;top:92px;" width="18" height="19" viewBox="0 0 18 19"><path d="M0.3 9.2H10.6M17 0.6Q12.6 4.6 10.6 9.2Q12.4 14 16.4 18.4" fill="none" stroke="#3a7f97" stroke-width="1.35"/></svg>
<div class="t" style="left:723.1px;top:94px;font-size:14.5px;line-height:14.5px;color:#000;letter-spacing:0.080px;">Collab&nbsp;and&nbsp;Sync&nbsp;Summary</div>
<svg class="b" style="left:935px;top:92px;" width="18" height="19" viewBox="0 0 18 19"><path d="M0.3 9.2H10.6M17 0.6Q12.6 4.6 10.6 9.2Q12.4 14 16.4 18.4" fill="none" stroke="#3a7f97" stroke-width="1.35"/></svg>
<div class="t" style="left:959.6px;top:94px;font-size:14.5px;line-height:14.5px;color:#000;letter-spacing:0.258px;">Collaboration</div>
<svg class="b" style="left:1058px;top:93px;" width="16" height="16" viewBox="0 0 16 16"><path d="M2.2 3.6L3.8 2L7.6 5.6L11.4 2L13 3.6L9.4 7.4L13 11.2L11.4 12.8L7.6 9.2L3.8 12.8L2.2 11.2L5.8 7.4Z" fill="#fff" stroke="#555" stroke-width="1"/></svg>
<svg class="b" style="left:1853.7px;top:92.5px;" width="14" height="6" viewBox="0 0 14 6"><rect x="1" y="0.8" width="12" height="4" fill="#fff" stroke="#666" stroke-width="1.1"/></svg>
<svg class="b" style="left:1882px;top:92.2px;" width="14" height="14" viewBox="0 0 14 14"><rect x="1" y="1.2" width="12" height="11.6" fill="#fff" stroke="#666" stroke-width="1.1"/><path d="M1 3.6H13" stroke="#666" stroke-width="1.3"/></svg>
<div class="b" style="left:703px;top:124.3px;width:73.7px;height:27.3px;background:#c0c0c0;clip-path:polygon(0 0,71.5px 0,100% 2.2px,100% 100%,0 100%);"></div>
<div class="b" style="left:776.5px;top:148.1px;width:1111.5px;height:1.4px;background:#a8a8a8;"></div>
<div class="b" style="left:776.7px;top:149.5px;width:1111.3px;height:1.8px;background:linear-gradient(#cdcdcd,#ececec);"></div>
<div class="b" style="left:703px;top:150px;width:2.6px;height:817.5px;background:#c0c0c0;"></div>
<div class="b" style="left:834.1px;top:124.4px;width:1.8px;height:24px;background:#b8b8b8;"></div>
<div class="b" style="left:909.5px;top:124.4px;width:1.8px;height:24px;background:#b8b8b8;"></div>
<div class="b" style="left:1020.4px;top:124.4px;width:1.8px;height:24px;background:#b8b8b8;"></div>
<div class="b" style="left:1095.1999999999998px;top:124.4px;width:1.8px;height:24px;background:#b8b8b8;"></div>
<div class="b" style="left:1164.3999999999999px;top:124.4px;width:1.8px;height:24px;background:#b8b8b8;"></div>
<div class="b" style="left:1272.8999999999999px;top:124.4px;width:1.8px;height:24px;background:#b8b8b8;"></div>
<div class="b" style="left:1375.6px;top:124.4px;width:1.8px;height:24px;background:#b8b8b8;"></div>
<div class="t" style="left:708.0px;top:131px;font-size:14.5px;line-height:14.5px;color:#000;letter-spacing:0.152px;">Summary</div>
<div class="t" style="left:781.6px;top:131px;font-size:14.5px;line-height:14.5px;color:#000;letter-spacing:-0.441px;">Session</div>
<div class="t" style="left:840.4px;top:131px;font-size:14.5px;line-height:14.5px;color:#000;letter-spacing:-0.067px;">Event&nbsp;Log</div>
<div class="t" style="left:915.8px;top:131px;font-size:14.5px;line-height:14.5px;color:#000;letter-spacing:-0.063px;">Quarantines&nbsp;(0)</div>
<div class="t" style="left:1026.6px;top:131px;font-size:14.5px;line-height:14.5px;color:#000;letter-spacing:-0.271px;">Retries&nbsp;(0)</div>
<div class="t" style="left:1101.8px;top:131px;font-size:14.5px;line-height:14.5px;color:#000;letter-spacing:-0.072px;">Alerts&nbsp;(0)</div>
<div class="t" style="left:1170.9px;top:131px;font-size:14.5px;line-height:14.5px;color:#000;letter-spacing:-0.019px;">Participants&nbsp;(2)</div>
<div class="t" style="left:1279.6px;top:131px;font-size:14.5px;line-height:14.5px;color:#000;letter-spacing:0.411px;">Configuration</div>
<div class="t" style="left:730.4px;top:177px;font-size:14.5px;line-height:14.5px;color:#000;letter-spacing:0.122px;">Summary&nbsp;View</div>
<div class="t" style="left:847.2px;top:178px;font-size:14.5px;line-height:14.5px;color:#000;letter-spacing:0.264px;">Actions</div>
<svg class="b" style="left:910px;top:181px;" width="12" height="8" viewBox="0 0 12 8"><path d="M1.2 1.2H10.8L6 6.6Z" fill="#222"/></svg>
<div class="b" style="left:718.1px;top:209.2px;width:1170px;height:1.4px;background:#9a9ca6;"></div>
<div class="b" style="left:718.1px;top:209.2px;width:1.8px;height:757.4px;background:#9c9caa;"></div>
<div class="b" style="left:906.9px;top:211px;width:1px;height:30px;background:#e2e2e2;"></div>
<div class="b" style="left:906.9px;top:241px;width:1px;height:726.5px;background:#ecf2f9;"></div>
<div class="b" style="left:1157.0px;top:211px;width:1px;height:30px;background:#e2e2e2;"></div>
<div class="b" style="left:1157.0px;top:241px;width:1px;height:726.5px;background:#ecf2f9;"></div>
<div class="b" style="left:1344.5px;top:211px;width:1px;height:30px;background:#e2e2e2;"></div>
<div class="b" style="left:1344.5px;top:241px;width:1px;height:726.5px;background:#ecf2f9;"></div>
<div class="b" style="left:1532.3px;top:211px;width:1px;height:30px;background:#e2e2e2;"></div>
<div class="b" style="left:1532.3px;top:241px;width:1px;height:726.5px;background:#ecf2f9;"></div>
<div class="b" style="left:900px;top:455.5px;width:640px;height:23px;background:#fff;"></div>
<div class="b" style="left:900px;top:598px;width:640px;height:23.5px;background:#fff;"></div>
<div class="t" style="left:728.1px;top:247px;font-size:14.5px;line-height:14.5px;font-weight:bold;color:#000;letter-spacing:-0.292px;">Job&nbsp;Status</div>
<div class="t" style="left:915.9px;top:247px;font-size:14.5px;line-height:14.5px;color:#279627;letter-spacing:0.212px;">Running</div>
<div class="t" style="left:728.1px;top:271px;font-size:14.5px;line-height:14.5px;color:#000;letter-spacing:0.133px;">Start&nbsp;Time</div>
<div class="t" style="left:915.9px;top:271px;font-size:14.5px;line-height:14.5px;color:#000;letter-spacing:-0.032px;">4/8/21&nbsp;1:47&nbsp;PM</div>
<div class="t" style="left:1352.8px;top:271px;font-size:14.5px;line-height:14.5px;color:#000;letter-spacing:-0.042px;">5&nbsp;days&nbsp;19&nbsp;hours&nbsp;55&nbsp;minu...</div>
<div class="t" style="left:1166.0px;top:271px;font-size:14.5px;line-height:14.5px;color:#000;letter-spacing:-0.063px;">Elapsed&nbsp;Time</div>
<div class="t" style="left:728.1px;top:318px;font-size:14.5px;line-height:14.5px;font-weight:bold;color:#000;letter-spacing:0.260px;">Watch&nbsp;Set</div>
<div class="t" style="left:728.1px;top:342px;font-size:14.5px;line-height:14.5px;color:#000;letter-spacing:-0.079px;">Total&nbsp;Files</div>
<div class="t" style="left:915.9px;top:342px;font-size:14.5px;line-height:14.5px;color:#000;">5</div>
<div class="t" style="left:1352.8px;top:342px;font-size:14.5px;line-height:14.5px;color:#000;">1</div>
<div class="t" style="left:1166.0px;top:342px;font-size:14.5px;line-height:14.5px;color:#000;letter-spacing:-0.016px;">Total&nbsp;Folders</div>
<div class="t" style="left:728.1px;top:366px;font-size:14.5px;line-height:14.5px;color:#000;letter-spacing:-0.020px;">Total&nbsp;Bytes</div>
<div class="t" style="left:915.9px;top:366px;font-size:14.5px;line-height:14.5px;color:#000;letter-spacing:-0.306px;">6.5&nbsp;MB</div>
<div class="t" style="left:728.1px;top:413px;font-size:14.5px;line-height:14.5px;font-weight:bold;color:#000;letter-spacing:0.140px;">Activity</div>
<div class="t" style="left:728.1px;top:437px;font-size:14.5px;line-height:14.5px;color:#000;letter-spacing:0.072px;">Active&nbsp;Opens</div>
<div class="t" style="left:915.9px;top:437px;font-size:14.5px;line-height:14.5px;color:#000;">0</div>
<div class="t" style="left:1352.8px;top:437px;font-size:14.5px;line-height:14.5px;color:#000;">0</div>
<div class="t" style="left:1166.0px;top:437px;font-size:14.5px;line-height:14.5px;color:#000;letter-spacing:-0.074px;">File&nbsp;Quarantines</div>
<div class="t" style="left:728.1px;top:461px;font-size:14.5px;line-height:14.5px;color:#000;letter-spacing:-0.082px;">Files&nbsp;Pending</div>
<div class="t" style="left:915.9px;top:458px;font-size:14.5px;line-height:14.5px;color:#000;">0</div>
<div class="t" style="left:1352.8px;top:458px;font-size:14.5px;line-height:14.5px;color:#000;">0</div>
<div class="t" style="left:1166.0px;top:461px;font-size:14.5px;line-height:14.5px;color:#000;letter-spacing:-0.127px;">Renames&nbsp;Pending</div>
<div class="t" style="left:728.1px;top:484px;font-size:14.5px;line-height:14.5px;color:#000;letter-spacing:-0.031px;">Bytes&nbsp;Pending</div>
<div class="t" style="left:915.9px;top:484px;font-size:14.5px;line-height:14.5px;color:#000;letter-spacing:-0.150px;">0&nbsp;bytes</div>
<div class="t" style="left:1352.8px;top:484px;font-size:14.5px;line-height:14.5px;color:#000;">0</div>
<div class="t" style="left:1166.0px;top:484px;font-size:14.5px;line-height:14.5px;color:#000;letter-spacing:-0.081px;">Deletes&nbsp;Pending</div>
<div class="t" style="left:728.1px;top:508px;font-size:14.5px;line-height:14.5px;color:#000;letter-spacing:0.169px;">Metadata&nbsp;Pending</div>
<div class="t" style="left:915.9px;top:508px;font-size:14.5px;line-height:14.5px;color:#000;">0</div>
<div class="t" style="left:1352.8px;top:508px;font-size:14.5px;line-height:14.5px;color:#000;">0</div>
<div class="t" style="left:1166.0px;top:508px;font-size:14.5px;line-height:14.5px;color:#000;letter-spacing:-0.327px;">File&nbsp;Retries</div>
<div class="t" style="left:728.1px;top:556px;font-size:14.5px;line-height:14.5px;font-weight:bold;color:#000;letter-spacing:-0.100px;">Replication&nbsp;Status</div>
<div class="t" style="left:728.1px;top:579px;font-size:14.5px;line-height:14.5px;color:#000;letter-spacing:-0.173px;">Bytes&nbsp;Transferred</div>
<div class="t" style="left:915.9px;top:579px;font-size:14.5px;line-height:14.5px;color:#000;letter-spacing:-0.699px;">23.2&nbsp;KB</div>
<div class="t" style="left:1166.0px;top:579px;font-size:14.5px;line-height:14.5px;color:#000;letter-spacing:-0.064px;">Delta-level&nbsp;Savings</div>
<div class="t" style="left:728.1px;top:603px;font-size:14.5px;line-height:14.5px;color:#000;letter-spacing:0.194px;">Added</div>
<div class="t" style="left:915.9px;top:601px;font-size:14.5px;line-height:14.5px;color:#000;">0</div>
<div class="t" style="left:1352.8px;top:601px;font-size:14.5px;line-height:14.5px;color:#000;">2</div>
<div class="t" style="left:1166.0px;top:603px;font-size:14.5px;line-height:14.5px;color:#000;letter-spacing:-0.225px;">Renamed</div>
<div class="t" style="left:728.1px;top:627px;font-size:14.5px;line-height:14.5px;color:#000;letter-spacing:0.097px;">Updated</div>
<div class="t" style="left:915.9px;top:627px;font-size:14.5px;line-height:14.5px;color:#000;">3</div>
<div class="t" style="left:1352.8px;top:627px;font-size:14.5px;line-height:14.5px;color:#000;">0</div>
<div class="t" style="left:1166.0px;top:627px;font-size:14.5px;line-height:14.5px;color:#000;letter-spacing:-0.183px;">Deleted</div>
<div class="t" style="left:728.1px;top:651px;font-size:14.5px;line-height:14.5px;color:#000;letter-spacing:0.038px;">Metadata&nbsp;Updates</div>
<div class="t" style="left:915.9px;top:651px;font-size:14.5px;line-height:14.5px;color:#000;">0</div>
<div class="t" style="left:728.1px;top:698px;font-size:14.5px;line-height:14.5px;font-weight:bold;color:#000;letter-spacing:-0.245px;">Background&nbsp;Scan</div>
<div class="t" style="left:728.1px;top:722px;font-size:14.5px;line-height:14.5px;color:#000;letter-spacing:-0.335px;">Status</div>
<div class="t" style="left:915.9px;top:722px;font-size:14.5px;line-height:14.5px;color:#000;letter-spacing:0.286px;">Completed</div>
<div class="t" style="left:728.1px;top:746px;font-size:14.5px;line-height:14.5px;color:#000;letter-spacing:0.133px;">Start&nbsp;Time</div>
<div class="t" style="left:915.9px;top:746px;font-size:14.5px;line-height:14.5px;color:#000;letter-spacing:-0.032px;">4/8/21&nbsp;1:47&nbsp;PM</div>
<div class="t" style="left:1352.8px;top:746px;font-size:14.5px;line-height:14.5px;color:#000;letter-spacing:-0.530px;">00:00:02</div>
<div class="t" style="left:1166.0px;top:746px;font-size:14.5px;line-height:14.5px;color:#000;letter-spacing:-0.063px;">Elapsed&nbsp;Time</div>
<div class="t" style="left:728.1px;top:769px;font-size:14.5px;line-height:14.5px;color:#000;letter-spacing:-0.079px;">Files&nbsp;to&nbsp;Replicate</div>
<div class="t" style="left:915.9px;top:769px;font-size:14.5px;line-height:14.5px;color:#000;">0</div>
<div class="t" style="left:1352.8px;top:769px;font-size:14.5px;line-height:14.5px;color:#000;">0</div>
<div class="t" style="left:1166.0px;top:769px;font-size:14.5px;line-height:14.5px;color:#000;letter-spacing:-0.185px;">Files&nbsp;Replicated</div>
<div class="t" style="left:728.1px;top:793px;font-size:14.5px;line-height:14.5px;color:#000;letter-spacing:-0.054px;">Bytes&nbsp;to&nbsp;Replicate</div>
<div class="t" style="left:915.9px;top:793px;font-size:14.5px;line-height:14.5px;color:#000;letter-spacing:-0.150px;">0&nbsp;bytes</div>
<div class="t" style="left:1352.8px;top:793px;font-size:14.5px;line-height:14.5px;color:#000;letter-spacing:-0.093px;">0&nbsp;bytes</div>
<div class="t" style="left:1166.0px;top:793px;font-size:14.5px;line-height:14.5px;color:#000;letter-spacing:-0.144px;">Bytes&nbsp;Replicated</div>
<div class="t" style="left:728.1px;top:817px;font-size:14.5px;line-height:14.5px;color:#000;letter-spacing:0.121px;">Metadata&nbsp;to&nbsp;Replicate</div>
<div class="t" style="left:915.9px;top:817px;font-size:14.5px;line-height:14.5px;color:#000;">0</div>
<div class="t" style="left:1352.8px;top:817px;font-size:14.5px;line-height:14.5px;color:#000;">0</div>
<div class="t" style="left:1166.0px;top:817px;font-size:14.5px;line-height:14.5px;color:#000;letter-spacing:0.042px;">Metadata&nbsp;Replicated</div>
<div class="b" style="left:1888.2px;top:115.4px;width:20.2px;height:853px;background:#f0f0f0;"></div>
<div class="b" style="left:1889.2px;top:139.4px;width:17.6px;height:271px;background:#cdcdcd;"></div>
<svg class="b" style="left:1891px;top:124px;" width="14" height="10" viewBox="0 0 14 10"><path d="M2.4 8L7 2.8L11.6 8" fill="none" stroke="#4f4f4f" stroke-width="2.3"/></svg>
<svg class="b" style="left:1890.5px;top:951px;" width="14" height="10" viewBox="0 0 14 10"><path d="M2.4 2L7 7.2L11.6 2" fill="none" stroke="#4f4f4f" stroke-width="2.3"/></svg>
<div class="b" style="left:695.6px;top:967.5px;width:1212.8px;height:20.4px;background:#f0f0f0;"></div>
<div class="b" style="left:718.5px;top:968.8px;width:560.8px;height:17px;background:#cdcdcd;"></div>
<svg class="b" style="left:702px;top:970px;" width="10" height="14" viewBox="0 0 10 14"><path d="M8.2 2.4L3 7L8.2 11.6" fill="none" stroke="#4f4f4f" stroke-width="2.3"/></svg>
<svg class="b" style="left:1872px;top:970px;" width="10" height="14" viewBox="0 0 10 14"><path d="M1.8 2.4L7 7L1.8 11.6" fill="none" stroke="#4f4f4f" stroke-width="2.3"/></svg>
<div class="b" style="left:1243.2px;top:994.5px;width:1.2px;height:30.5px;background:#a0a0a0;"></div>
<svg class="b" style="left:1555.3px;top:994.5px;" width="6" height="31.599999999999998" viewBox="0 0 6 31.599999999999998"><rect x="0.4" y="1.10" width="2" height="2" fill="#fbfbfb"/><path d="M1.6 4.10L4.4 1.90V4.10Z" fill="#ababab"/><rect x="1.8" y="3.10" width="2.6" height="1" fill="#b2b2b2"/><rect x="0.4" y="5.70" width="2" height="2" fill="#fbfbfb"/><path d="M1.6 8.70L4.4 6.50V8.70Z" fill="#ababab"/><rect x="1.8" y="7.70" width="2.6" height="1" fill="#b2b2b2"/><rect x="0.4" y="10.30" width="2" height="2" fill="#fbfbfb"/><path d="M1.6 13.30L4.4 11.10V13.30Z" fill="#ababab"/><rect x="1.8" y="12.30" width="2.6" height="1" fill="#b2b2b2"/><rect x="0.4" y="14.90" width="2" height="2" fill="#fbfbfb"/><path d="M1.6 17.90L4.4 15.70V17.90Z" fill="#ababab"/><rect x="1.8" y="16.90" width="2.6" height="1" fill="#b2b2b2"/><rect x="0.4" y="19.50" width="2" height="2" fill="#fbfbfb"/><path d="M1.6 22.50L4.4 20.30V22.50Z" fill="#ababab"/><rect x="1.8" y="21.50" width="2.6" height="1" fill="#b2b2b2"/><rect x="0.4" y="24.10" width="2" height="2" fill="#fbfbfb"/><rect x="2.6" y="25.50" width="1.6" height="1" fill="#c4c4c4"/></svg>
<div class="b" style="left:0px;top:1027.5px;width:1917px;height:1px;background:#fff;"></div>
<div class="b" style="left:0px;top:1028.5px;width:1917px;height:1.5px;background:#161616;"></div>
<svg class="b" style="left:17px;top:58px;" width="22" height="22" viewBox="0 0 22 22"><defs><linearGradient id="gw" x1="0" y1="0" x2="1" y2="1"><stop offset="0" stop-color="#dff0fb"/><stop offset="1" stop-color="#ffffff"/></linearGradient></defs><rect x="1.8" y="5.2" width="16" height="14" fill="url(#gw)" stroke="#c8a24a" stroke-width="1"/><rect x="1.8" y="5.2" width="13" height="3" fill="#4f8fdc"/><path d="M4 19.2C10 19 14.5 15.5 15.2 8" fill="none" stroke="#f0d060" stroke-width="1.1"/><path d="M15.2 2.2L17 5.3L20.2 7L17 8.7L15.2 11.8L13.4 8.7L10.2 7L13.4 5.3Z" fill="#f7dc78" stroke="#c99a28" stroke-width="0.7"/><path d="M15.2 4V10M12.2 7H18.2" stroke="#fff8d8" stroke-width="0.8"/></svg>
<svg class="b" style="left:46px;top:59px;" width="22" height="22" viewBox="0 0 22 22"><g transform="translate(1,1.4) scale(1.0)"><rect x="0.5" y="0.5" width="17.6" height="17.6" fill="#e9e9e9" stroke="#c3c3c3" stroke-width="1"/><rect x="3.6" y="0.8" width="11.2" height="7.8" fill="#f8f8f8" stroke="#d0d0d0" stroke-width="0.7"/><rect x="5" y="11.6" width="8.6" height="6.4" fill="#d6d6d6" stroke="#c3c3c3" stroke-width="0.7"/><rect x="6.6" y="13.4" width="3.2" height="4.6" fill="#f4f4f4"/></g></svg>
<svg class="b" style="left:75px;top:59px;" width="22" height="22" viewBox="0 0 22 22"><rect x="1" y="1.2" width="12" height="12" fill="#efefef" stroke="#c8c8c8" stroke-width="0.9"/><rect x="3.5" y="3.6" width="12" height="12" fill="#efefef" stroke="#c8c8c8" stroke-width="0.9"/><g transform="translate(6.4,6.4) scale(0.72)"><rect x="0.5" y="0.5" width="17.6" height="17.6" fill="#e9e9e9" stroke="#c3c3c3" stroke-width="1"/><rect x="3.6" y="0.8" width="11.2" height="7.8" fill="#f8f8f8" stroke="#d0d0d0" stroke-width="0.7"/><rect x="5" y="11.6" width="8.6" height="6.4" fill="#d6d6d6" stroke="#c3c3c3" stroke-width="0.7"/><rect x="6.6" y="13.4" width="3.2" height="4.6" fill="#f4f4f4"/></g></svg>
<svg class="b" style="left:122.6px;top:58.8px;" width="22" height="22" viewBox="0 0 22 22"><rect x="1" y="1" width="17.8" height="17.4" fill="#e4f1fc" stroke="#93a4cc" stroke-width="1.1"/><circle cx="6.2" cy="6.2" r="2.3" fill="#fff" stroke="#86688f" stroke-width="1"/><circle cx="6.2" cy="13.4" r="2.3" fill="#fff" stroke="#86688f" stroke-width="1"/><path d="M10.5 6.2H16.3M10.5 13.4H16.3" stroke="#6a86c8" stroke-width="1.3"/></svg>
<svg class="b" style="left:150px;top:59.599999999999994px;" width="22" height="20" viewBox="0 0 22 20"><defs><linearGradient id="gbolt" x1="0" y1="0" x2="0.3" y2="1"><stop offset="0" stop-color="#faea96"/><stop offset="0.5" stop-color="#f3cf4e"/><stop offset="1" stop-color="#e6ac24"/></linearGradient></defs><path d="M10 2.2L18.5 1L20.5 2.4V17L18.5 18.2L10 16.6Z" fill="url(#gsv)" stroke="#9c9c9c" stroke-width="0.8"/><path d="M12 4.4l6-0.6M12 6.4l6-0.4M12 8.4l6-0.2" stroke="#9a9a9a" stroke-width="0.8"/><rect x="16.2" y="10.5" width="2" height="2" fill="#3cb043"/><path d="M4.5 3.5L13.5 2.6L10.6 7.4L14.4 7.2L3.2 15.6L6.6 9.8L1.2 10.2Z" fill="url(#gbolt)" stroke="#e3ad22" stroke-width="0.5"/></svg>
<svg class="b" style="left:178px;top:57px;" width="24" height="24" viewBox="0 0 24 24"><circle cx="15" cy="8.6" r="6.4" fill="#fdfdf6" stroke="#b8b8a8" stroke-width="1.1"/><path d="M15 4.2V8.8L17.6 10.6" fill="none" stroke="#222" stroke-width="1.2"/><rect x="1.5" y="9" width="11" height="11.4" fill="#eef4fc" stroke="#3f74c0" stroke-width="1"/><rect x="1.5" y="9" width="11" height="2.6" fill="#4a86c8"/><path d="M4.6 13.6v4.8M6.8 13.6h3.4l-3.4 4.8h3.4" stroke="#1a2fb0" stroke-width="1.4" fill="none"/></svg>
<svg class="b" style="left:207.5px;top:58.5px;" width="20" height="20" viewBox="0 0 20 20"><g opacity="1.0"><path d="M1.2 2.6L6.4 0.9L18.6 11.6L12.4 18.9L1.6 8.4Z" fill="#fefefe" stroke="#cfcfcf" stroke-width="1.1" stroke-linejoin="round"/><path d="M7.2 7.6L10.2 4.9L16 10.4L12.6 13.6Z" fill="#8ccaf6"/><circle cx="4.2" cy="4.6" r="1.25" fill="#ececec" stroke="#c4c4c4" stroke-width="0.7"/></g></svg>
<svg class="b" style="left:255px;top:58px;" width="22" height="22" viewBox="0 0 22 22"><defs><radialGradient id="gr" cx="0.5" cy="0.4" r="0.65"><stop offset="0" stop-color="#f59a86"/><stop offset="1" stop-color="#e8584a"/></radialGradient></defs><circle cx="10.8" cy="11" r="8.8" fill="url(#gr)"/><circle cx="10.8" cy="11" r="7.4" fill="none" stroke="#f7b3a6" stroke-width="0.7"/><rect x="9.9" y="5.6" width="1.9" height="7" rx="0.6" fill="#fff"/><rect x="9.9" y="14" width="1.9" height="1.9" rx="0.6" fill="#fff"/></svg>
<svg class="b" style="left:287.5px;top:58.4px;" width="15" height="21" viewBox="0 0 15 21"><defs><linearGradient id="gz" x1="0" y1="0" x2="1" y2="1"><stop offset="0" stop-color="#5cdf3a"/><stop offset="0.45" stop-color="#74e657"/><stop offset="1" stop-color="#b4f4a6"/></linearGradient></defs><path d="M3 4.2V2.6Q3 0.7 4.9 0.7Q6.8 0.7 6.8 2.6V4.2H13.2V9.2H10.6Q9.2 9.2 9.2 10.4Q9.2 11.6 10.6 11.6H13.2V17.6H11.8V19Q11.8 20.2 10 20.2Q8.2 20.2 8.2 19V17.6H0.8V15H3.4Q4.8 15 4.8 13.8Q4.8 12.6 3.4 12.6H0.8V4.2Z" fill="url(#gz)" stroke="#48bd35" stroke-width="0.8" stroke-linejoin="round"/></svg>
<svg class="b" style="left:314px;top:57px;" width="20" height="24" viewBox="0 0 20 24"><rect x="2" y="4.2" width="14.4" height="16.6" rx="1" fill="#e8c9a8" stroke="#cfa47c" stroke-width="0.8"/><rect x="3.8" y="6.2" width="10.8" height="13" fill="#f6f8fc"/><path d="M6 2.2H12.4L13.6 5.6H4.8Z" fill="#8f9bb0"/><path d="M3.2 13.6L6.6 17L12.8 9" fill="none" stroke="#1f6fd0" stroke-width="2"/><path d="M11 15.6h2.4" stroke="#666" stroke-width="0.8"/></svg>
<svg class="b" style="left:340px;top:58px;" width="24" height="22" viewBox="0 0 24 22"><path d="M10.6 8.4A5.4 5.4 0 0 1 19.9 7.2" fill="none" stroke="#cf9420" stroke-width="4.4"/><path d="M17 7.2L22.6 6L20.8 13.2Z" fill="#f1c040" stroke="#cf9420" stroke-width="0.9" stroke-linejoin="round"/><path d="M10.6 8.4A5.4 5.4 0 0 1 19.9 7.2" fill="none" stroke="#f6cf58" stroke-width="2.8"/><path d="M13.4 13.6A5.4 5.4 0 0 1 4.1 14.8" fill="none" stroke="#cf9420" stroke-width="4.4"/><path d="M7 14.8L1.4 16L3.2 8.8Z" fill="#f1c040" stroke="#cf9420" stroke-width="0.9" stroke-linejoin="round"/><path d="M13.4 13.6A5.4 5.4 0 0 1 4.1 14.8" fill="none" stroke="#f6cf58" stroke-width="2.8"/></svg>
<svg class="b" style="left:10.1px;top:89.8px;" width="15" height="21" viewBox="0 0 15 21"><defs><linearGradient id="gz" x1="0" y1="0" x2="1" y2="1"><stop offset="0" stop-color="#5cdf3a"/><stop offset="0.45" stop-color="#74e657"/><stop offset="1" stop-color="#b4f4a6"/></linearGradient></defs><path d="M3 4.2V2.6Q3 0.7 4.9 0.7Q6.8 0.7 6.8 2.6V4.2H13.2V9.2H10.6Q9.2 9.2 9.2 10.4Q9.2 11.6 10.6 11.6H13.2V17.6H11.8V19Q11.8 20.2 10 20.2Q8.2 20.2 8.2 19V17.6H0.8V15H3.4Q4.8 15 4.8 13.8Q4.8 12.6 3.4 12.6H0.8V4.2Z" fill="url(#gz)" stroke="#48bd35" stroke-width="0.8" stroke-linejoin="round"/></svg>
</body></html>
